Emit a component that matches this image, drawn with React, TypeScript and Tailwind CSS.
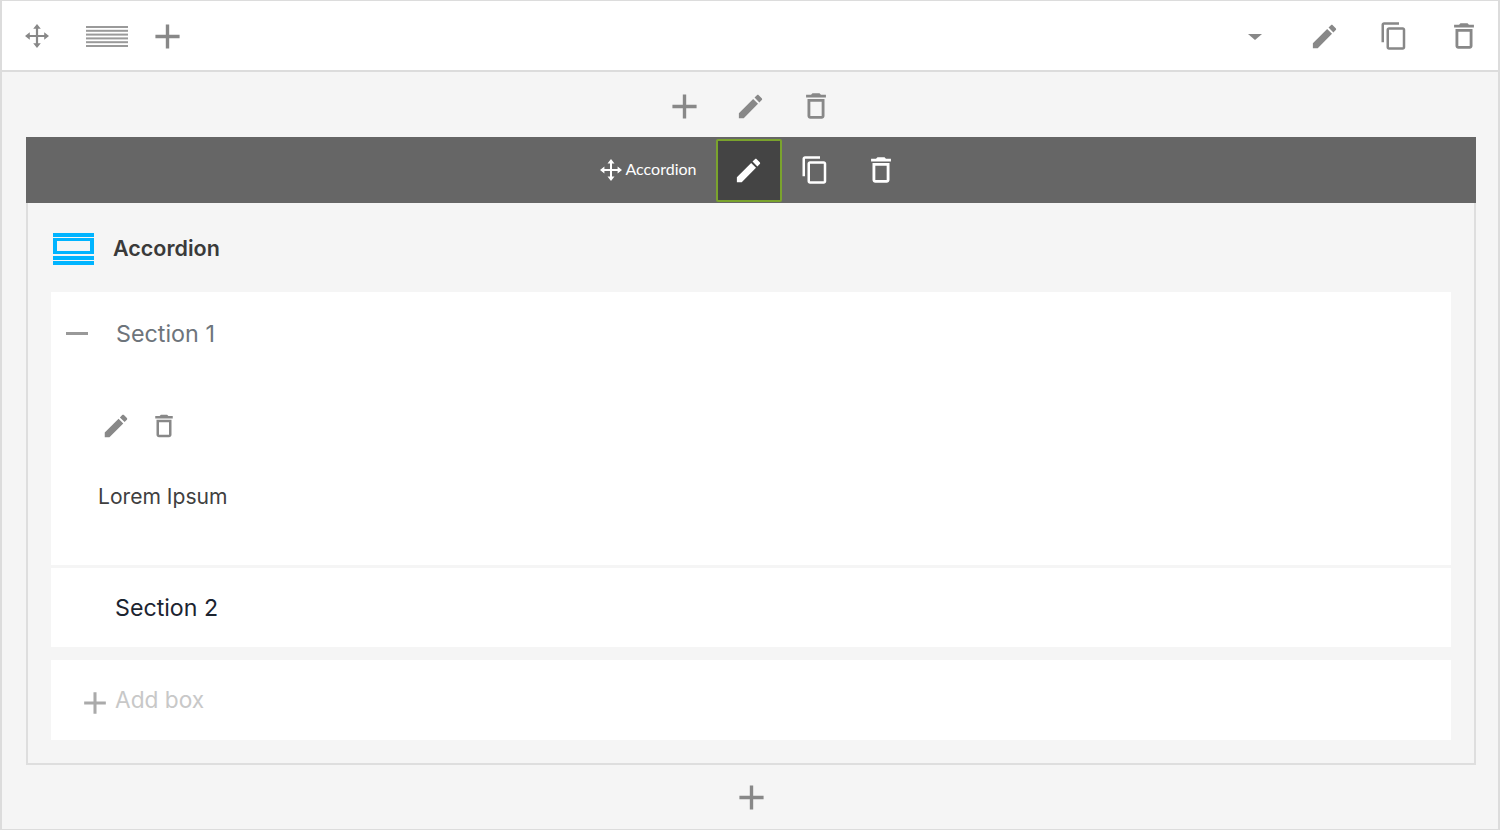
import React from 'react';

const PENCIL = 'M3 17.25V21h3.75L17.81 9.94l-3.75-3.75L3 17.25zM20.71 7.04c.39-.39.39-1.02 0-1.41l-2.34-2.34c-.39-.39-1.02-.39-1.41 0l-1.83 1.83 3.75 3.75 1.83-1.83z';
const COPY = 'M16 1H4c-1.1 0-2 .9-2 2v14h2V3h12V1zm3 4H8c-1.1 0-2 .9-2 2v14c0 1.1.9 2 2 2h11c1.1 0 2-.9 2-2V7c0-1.1-.9-2-2-2zm0 16H8V7h11v14z';
const TRASH = 'M6 19c0 1.1.9 2 2 2h8c1.1 0 2-.9 2-2V7H6v12zM8 9h8v10H8V9zm7.5-5l-1-1h-5l-1 1H5v2h14V4z';
const PLUS = 'M10.6 2h2.8v8.6H22v2.8h-8.6V22h-2.8v-8.6H2v-2.8h8.6z';

interface IconProps {
  d: string;
  className?: string;
}

function Icon({ d, className = '' }: IconProps) {
  return (
    <svg viewBox="0 0 24 24" fill="currentColor" className={className}>
      <path d={d} />
    </svg>
  );
}

function MoveIcon({ className = '' }: { className?: string }) {
  return (
    <svg viewBox="0 0 24 24" fill="currentColor" className={className}>
      <path d="M10.9 4h2.2v6.9H20v2.2h-6.9V20h-2.2v-6.9H4v-2.2h6.9z" />
      <path d="M12 0 15.8 4.8H8.2zM12 24 8.2 19.2h7.6zM0 12 4.8 8.2v7.6zM24 12 19.2 15.8V8.2z" />
    </svg>
  );
}

function LinesIcon() {
  return (
    <svg viewBox="0 0 42 21" fill="#9a9a9a" className="w-[42px] h-[21px]">
      <rect y="0" width="42" height="2" />
      <rect y="3.8" width="42" height="2" />
      <rect y="7.6" width="42" height="2" />
      <rect y="11.4" width="42" height="2" />
      <rect y="15.2" width="42" height="2" />
      <rect y="19" width="42" height="2" />
    </svg>
  );
}

function AccordionIcon() {
  return (
    <svg viewBox="0 0 41 32" fill="#00b4ff" className="w-[41px] h-[32px] mt-[1px]">
      <rect x="0" y="0" width="41" height="4" />
      <path fillRule="evenodd" d="M0 5h41v16H0zM4 8v10h33V8z" />
      <rect x="0" y="23" width="41" height="4" />
      <rect x="0" y="28" width="41" height="4" />
    </svg>
  );
}

export default function App() {
  return (
    <div className="w-[1500px] h-[832px] bg-white font-['Inter',sans-serif]">
      <div className="h-[830px] border border-[#dcdcdc] border-l-2 border-r-2 bg-[#f5f5f5] flex flex-col">
        {/* top toolbar */}
        <div className="h-[71px] shrink-0 bg-white border-b-2 border-[#dcdcdc] flex items-center justify-between text-[#888888] pl-[23px] pr-[17px] pt-px">
          <div className="flex items-center">
            <MoveIcon className="w-[24px] h-[24px]" />
            <div className="ml-[37px]"><LinesIcon /></div>
            <Icon d={PLUS} className="w-[29px] h-[29px] ml-[25px]" />
          </div>
          <div className="flex items-center">
            <div className="w-0 h-0 border-x-[7px] border-x-transparent border-t-[6px] border-t-[#888888] mr-[47px] mt-[2px]" />
            <Icon d={PENCIL} className="w-[31px] h-[31px] mr-[39px]" />
            <Icon d={COPY} className="w-[30px] h-[30px] mr-[38px]" />
            <Icon d={TRASH} className="w-[34px] h-[34px]" />
          </div>
        </div>

        <div className="flex-1 pl-6 pr-[22px] flex flex-col">
          {/* row above the panel */}
          <div className="h-[65px] shrink-0 flex items-center justify-center text-[#888888] pt-[3px] pr-[2px]">
            <div className="w-[66px] flex justify-center"><Icon d={PLUS} className="w-[29px] h-[29px]" /></div>
            <div className="w-[66px] flex justify-center"><Icon d={PENCIL} className="w-[31px] h-[31px]" /></div>
            <div className="w-[66px] flex justify-center"><Icon d={TRASH} className="w-[34px] h-[34px]" /></div>
          </div>

          {/* panel header */}
          <div className="h-[66px] shrink-0 bg-[#666666] flex items-center justify-center text-white">
            <div className="w-[127px] flex items-center pl-[11px] font-['Lato',sans-serif] text-[16px]">
              <MoveIcon className="w-[22px] h-[22px] shrink-0" />
              <span className="ml-[4px] -translate-y-px">Accordion</span>
            </div>
            <div className="w-[66px] h-[63px] bg-[#444444] border-2 border-[#7aa32d] rounded-[2px] flex items-center justify-center">
              <Icon d={PENCIL} className="w-[31px] h-[31px]" />
            </div>
            <div className="w-[66px] flex justify-center"><Icon d={COPY} className="w-[30px] h-[30px]" /></div>
            <div className="w-[66px] flex justify-center"><Icon d={TRASH} className="w-[34px] h-[34px]" /></div>
          </div>

          {/* panel body */}
          <div className="h-[562px] shrink-0 border-2 border-t-0 border-[#dedede] px-[23px] flex flex-col">
            <div className="h-[89px] shrink-0 flex items-center pl-[2px] pt-[1px]">
              <AccordionIcon />
              <span className="ml-[19px] text-[21.5px] font-semibold text-[#3a3a3a]">Accordion</span>
            </div>

            <div className="h-[273px] shrink-0 bg-white flex flex-col">
              <div className="h-[82px] shrink-0 flex items-center pl-[15px]">
                <div className="w-[22px] h-[3px] bg-[#999999]" />
                <span className="ml-[28px] text-[23.3px] text-[#6d747b] translate-y-px">Section 1</span>
              </div>
              <div className="flex items-center text-[#888888] pl-[50px] mt-[37px]">
                <Icon d={PENCIL} className="w-[30px] h-[30px]" />
                <Icon d={TRASH} className="w-[30px] h-[30px] ml-[18px]" />
              </div>
              <p className="ml-[47px] mt-[42px] text-[21.1px] leading-[28px] text-[#3f3f3f]">Lorem Ipsum</p>
            </div>

            <div className="h-[79px] shrink-0 mt-[3px] bg-white flex items-center pl-[64px]">
              <span className="text-[23.2px] text-[#1c2430] translate-y-px">Section 2</span>
            </div>

            <div className="h-[80px] shrink-0 mt-[13px] bg-white flex items-center pl-[31px]">
              <Icon d={PLUS} className="w-[26px] h-[26px] text-[#aaaaaa] mt-[6px]" />
              <span className="ml-[7px] text-[22.7px] text-[#c8c8c8]">Add box</span>
            </div>
          </div>

          {/* bottom add */}
          <div className="flex-1 flex items-center justify-center text-[#888888]">
            <Icon d={PLUS} className="w-[29px] h-[29px]" />
          </div>
        </div>
      </div>
    </div>
  );
}
